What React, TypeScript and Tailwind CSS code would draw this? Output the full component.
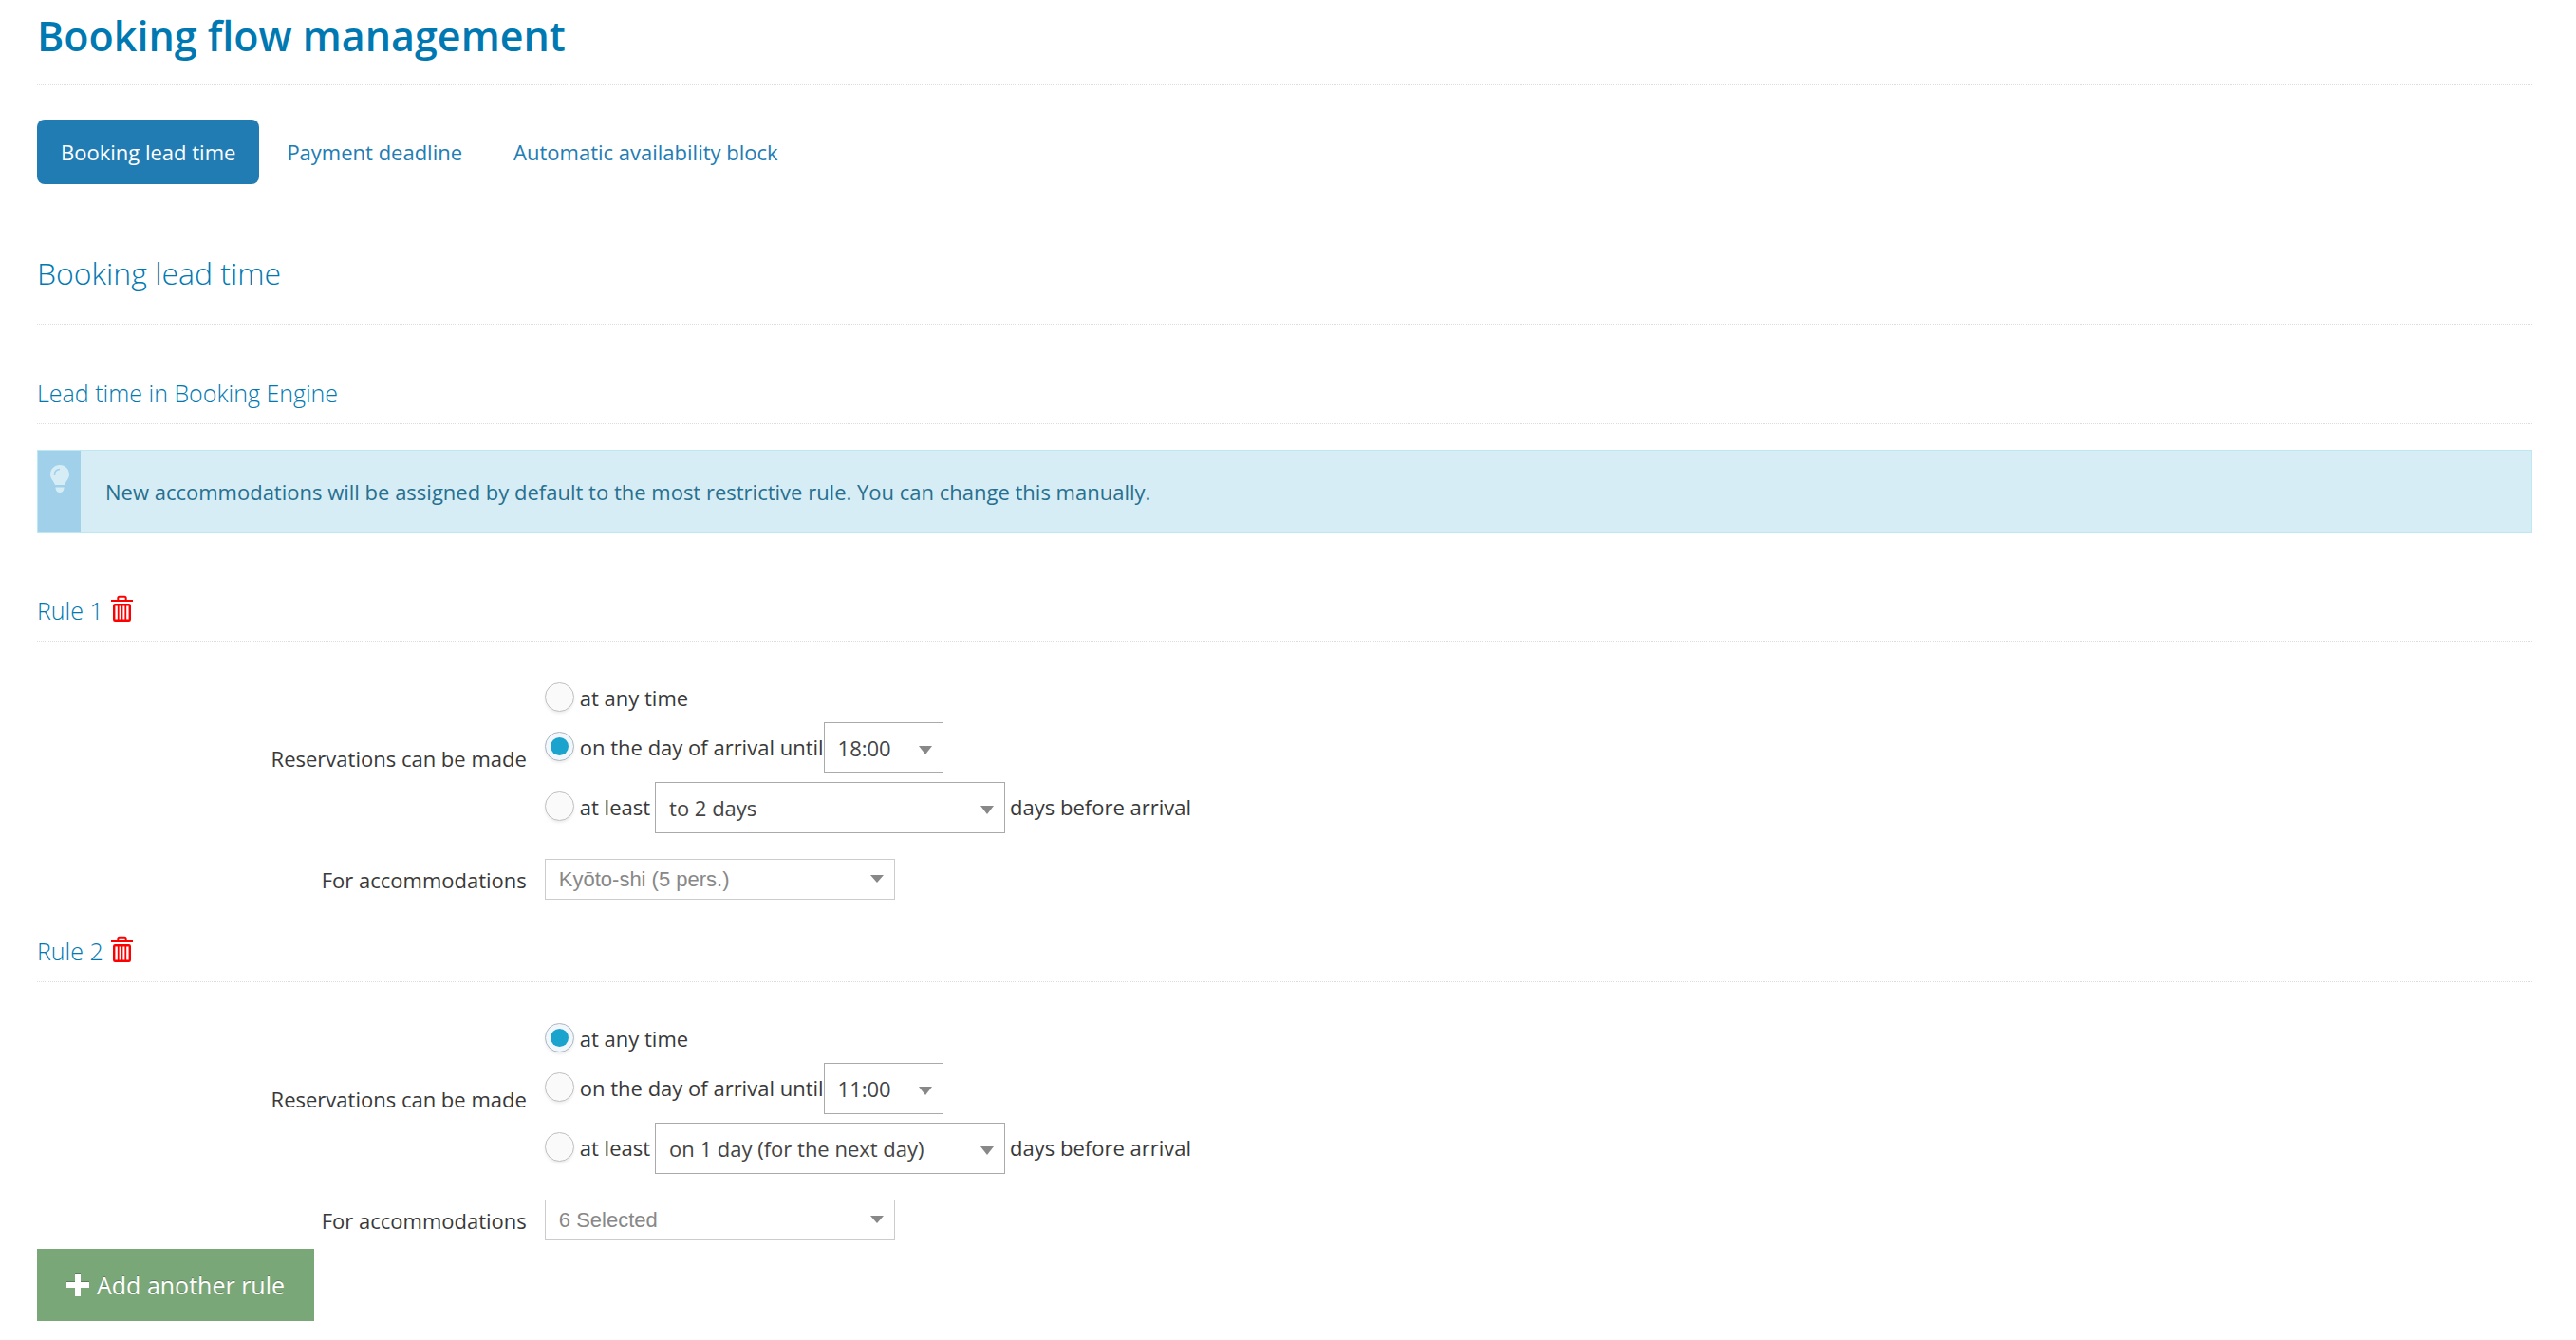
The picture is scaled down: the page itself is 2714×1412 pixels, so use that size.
import { useId, useState } from 'react';

type Mode = 'any' | 'arrival' | 'before';

interface Rule {
  id: number;
  mode: Mode;
  until: string;
  lead: string;
  accommodations: string;
}

const TABS = ['Booking lead time', 'Payment deadline', 'Automatic availability block'];
const HOURS = ['11:00', '18:00'];
const LEADS = ['on 1 day (for the next day)', 'to 2 days'];

const INITIAL: Rule[] = [
  { id: 1, mode: 'arrival', until: '18:00', lead: 'to 2 days', accommodations: 'Kyōto-shi (5 pers.)' },
  { id: 2, mode: 'any', until: '11:00', lead: 'on 1 day (for the next day)', accommodations: '6 Selected' },
];

function TrashIcon() {
  return (
    <svg width="24" height="29" viewBox="0 0 24 29" fill="none" stroke="#ff0000" strokeWidth="2">
      <path d="M7.300 6V3.200Q7.300 1.700 8.800 1.700H14.200Q15.700 1.700 15.700 3.200V6" />
      <path d="M0 6H23" />
      <rect x="3.200" y="10.200" width="16.600" height="16.600" rx="1" strokeWidth="2.400" />
      <path d="M7.700 10V27M11.500 10V27M15.300 10V27" strokeWidth="1.800" />
    </svg>
  );
}

function BulbIcon() {
  return (
    <svg width="20" height="30" viewBox="0 0 20 30" fill="#d7edf6">
      <path d="M10 0C4.300 0 0 4.400 0 10c0 4.300 3.500 7 5 11h10c1.500-4 5-6.700 5-11C20 4.400 15.700 0 10 0Z" />
      <path d="M5.500 23.500h9c0 3.300-1.700 5.500-4.500 5.500s-4.500-2.200-4.500-5.500Z" />
      <path d="M4.500 10.500C4.500 7 6.500 4.700 10 4.500" fill="none" stroke="#a0d0ea" strokeWidth="1.500" />
    </svg>
  );
}

function Caret({ wide }: { wide?: boolean }) {
  return wide ? (
    <svg className="pointer-events-none absolute right-3 top-[17px]" width="14" height="8" viewBox="0 0 14 8">
      <path d="M0 0H14L7 8Z" fill="#888888" />
    </svg>
  ) : (
    <svg className="pointer-events-none absolute right-3 top-[25px]" width="14" height="9" viewBox="0 0 14 9">
      <path d="M0 0H14L7 9Z" fill="#888888" />
    </svg>
  );
}

interface SelectProps {
  label: string;
  value: string;
  options: string[];
  className: string;
  onChange: (v: string) => void;
}

function Select({ label, value, options, className, onChange }: SelectProps) {
  return (
    <span className={`relative block ${className}`}>
      <select aria-label={label} value={value} onChange={e => onChange(e.target.value)}
        className="block h-[54px] w-full appearance-none border border-[#aaaaaa] bg-white pl-3.5 pr-8 text-[22px] text-[#444444]">
        {options.map(o => <option key={o}>{o}</option>)}
      </select>
      <Caret />
    </span>
  );
}

interface ChoiceProps { name: string; label: string; checked: boolean; onSelect: () => void; }

function Choice({ name, label, checked, onSelect }: ChoiceProps) {
  return (
    <label className="mb-[3px] flex items-center gap-1.5 whitespace-nowrap">
      <span className="grid place-items-center">
        <input type="radio" name={name} checked={checked} onChange={onSelect}
          className="peer col-start-1 row-start-1 size-[31px] appearance-none rounded-full border border-[#c0c0c0] bg-[#fafafa] shadow-[0_2px_3px_rgba(0,0,0,0.07)] checked:border-[#adb8c0] checked:bg-[#f2f7fd]" />
        <span className="pointer-events-none col-start-1 row-start-1 mb-px hidden size-[19px] rounded-full bg-[#19a3cd] peer-checked:block" />
      </span>
      {label}
    </label>
  );
}

interface RuleProps { rule: Rule; index: number; onChange: (patch: Partial<Rule>) => void; onRemove: () => void; }

function RuleBlock({ rule, index, onChange, onRemove }: RuleProps) {
  const name = useId();
  const accId = useId();

  return (
    <section className="mb-9">
      <div className="flex items-center gap-2 border-b border-dotted border-[#dddddd] pb-3.5">
        <h3 className="text-[25px] font-light leading-9 text-[#0079b2]">Rule {index + 1}</h3>
        <button type="button" aria-label={`Delete rule ${index + 1}`} onClick={onRemove} className="mb-1 cursor-pointer">
          <TrashIcon />
        </button>
      </div>

      <div role="radiogroup" aria-labelledby={`${name}-label`} className="flex items-center pt-11">
        <div id={`${name}-label`} className="w-1/5 pr-2.5 text-right">Reservations can be made</div>
        <div className="flex flex-col gap-[9px] pl-[9px]">
          <div className="flex h-8 items-center">
            <Choice name={name} label="at any time" checked={rule.mode === 'any'} onSelect={() => onChange({ mode: 'any' })} />
          </div>
          <div className="flex items-center">
            <Choice name={name} label="on the day of arrival until" checked={rule.mode === 'arrival'} onSelect={() => onChange({ mode: 'arrival' })} />
            <Select label="Latest time" value={rule.until} options={HOURS} className="w-[126px]" onChange={until => onChange({ until })} />
          </div>
          <div className="flex items-center gap-[5px]">
            <Choice name={name} label="at least" checked={rule.mode === 'before'} onSelect={() => onChange({ mode: 'before' })} />
            <Select label="Days in advance" value={rule.lead} options={LEADS} className="w-[369px]" onChange={lead => onChange({ lead })} />
            <span className="mb-[3px]">days before arrival</span>
          </div>
        </div>
      </div>

      <div className="flex items-center pt-[27px]">
        <label htmlFor={accId} className="w-1/5 pr-2.5 text-right">For accommodations</label>
        <div className="pl-[9px]">
          <span className="relative block w-[369px]">
            <select id={accId} defaultValue={rule.accommodations}
              className="block h-[43px] w-full appearance-none border border-[#cccccc] bg-white pl-3.5 pr-8 font-['Liberation_Sans',Arial,sans-serif] text-[22px] text-[#888888]">
              <option>{rule.accommodations}</option>
            </select>
            <Caret wide />
          </span>
        </div>
      </div>
    </section>
  );
}

export default function App() {
  const [tab, setTab] = useState(0);
  const [rules, setRules] = useState<Rule[]>(INITIAL);

  const patch = (id: number, p: Partial<Rule>) => setRules(rs => rs.map(r => (r.id === id ? { ...r, ...p } : r)));
  const remove = (id: number) => setRules(rs => rs.filter(r => r.id !== id));
  const add = () => setRules(rs => [...rs, { ...INITIAL[1], id: Date.now() }]);

  return (
    <main className="min-h-screen bg-white pb-5 pl-[39px] pr-[46px] pt-2 font-['Open_Sans',sans-serif] text-[22px] leading-8 text-[#393939]">
      <h1 className="border-b border-dotted border-[#dddddd] pb-[21px] text-[43px] font-semibold leading-[60px] text-[#0079b2]">
        Booking flow management
      </h1>

      {/* Tabs */}
      <nav className="mt-9 flex gap-1">
        {TABS.map((t, i) => (
          <a key={t} href={`#tab-${i}`} onClick={() => setTab(i)}
            className={`flex h-[68px] items-center rounded-lg px-[25px] ${tab === i ? 'bg-[#227cb4] text-white' : 'text-[#227cb4]'}`}>
            {t}
          </a>
        ))}
      </nav>

      <h2 className="mt-[72px] border-b border-dotted border-[#dddddd] pb-[31px] text-[32px] font-light leading-[44px] text-[#0079b2]">
        Booking lead time
      </h2>
      <h3 className="mt-[54px] border-b border-dotted border-[#dddddd] pb-3.5 text-[25px] font-light leading-9 text-[#0079b2]">
        Lead time in Booking Engine
      </h3>

      {/* Info */}
      <div className="mb-[63px] mt-[27px] flex h-[88px] border border-[#bce8f1] bg-[#d7edf6] text-[#27708f]">
        <div className="flex w-[45px] justify-center bg-[#a0d0ea] pt-[15px]">
          <BulbIcon />
        </div>
        <p className="flex items-center pl-[26px]">
          New accommodations will be assigned by default to the most restrictive rule. You can change this manually.
        </p>
      </div>

      {rules.map((r, i) => (
        <RuleBlock key={r.id} rule={r} index={i} onChange={p => patch(r.id, p)} onRemove={() => remove(r.id)} />
      ))}

      <button type="button" onClick={add}
        className="-mt-[27px] flex h-[76px] cursor-pointer items-center gap-2 bg-[#7aa777] px-[31px] text-[25px] text-white [text-shadow:0_-1px_0_rgba(0,0,0,0.25)]">
        <svg width="24" height="24" viewBox="0 0 24 24" fill="#ffffff" className="drop-shadow-[0_-1px_0_rgba(0,0,0,0.25)]">
          <path d="M9 0H15V9H24V15H15V24H9V15H0V9H9Z" />
        </svg>
        Add another rule
      </button>
    </main>
  );
}
